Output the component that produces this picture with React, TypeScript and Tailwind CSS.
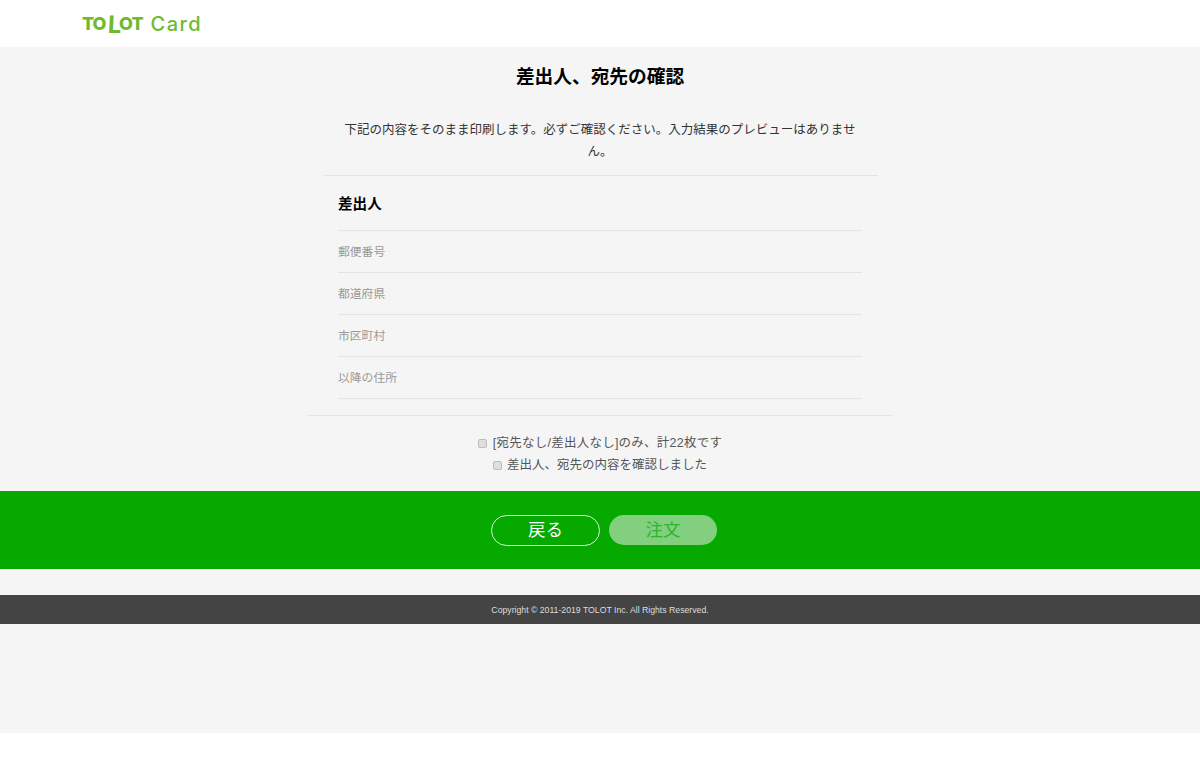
const font = { jp: "font-['Liberation_Sans','Noto_Sans_CJK_JP',sans-serif]" };

const labels = ["郵便番号", "都道府県", "市区町村", "以降の住所"];

const checkbox = "appearance-none w-[9px] h-[9px] rounded-[2px] border border-[#bdbdbd] bg-[#dedede]";

const Logo = () => (
  <div className="flex items-center text-[#6fba2c] font-['Inter',sans-serif] ml-[82px]">
    <span className="flex items-center text-[18px] font-extrabold leading-none tracking-[-1px]">
      TO
      <span className="relative top-[1px] ml-[2px] mr-[-1px] text-[24px] font-bold leading-none -skew-x-3">L</span>
      OT
    </span>
    <span className="ml-[8px] text-[20px] font-medium leading-none tracking-[1.4px]">Card</span>
  </div>
);

export default function App() {
  return (
    <div className={`${font.jp} bg-white min-h-[760px]`}>
      <header className="h-[47px] bg-white flex items-center">
        <Logo />
      </header>

      <div className="bg-[#f5f5f5] h-[686px]">
        <main className="w-[586px] mx-auto">
          <h2 className="pt-[18px] text-center text-[18.7px] font-bold leading-[24px] text-black">差出人、宛先の確認</h2>
          <div className="mx-[15.5px] border-b border-[#e4e4e4]">
            <p className="mt-[30px] px-[22px] pb-[12px] text-center text-[12.5px] leading-[22px] text-[#333]">
              下記の内容をそのまま印刷します。必ずご確認ください。入力結果のプレビューはありません。
            </p>
          </div>
          <section className="border-b border-[#e4e4e4]">
            <div className="mx-[31px] mb-4">
              <h3 className="h-[55px] pt-[3px] flex items-center border-b border-[#e4e4e4] text-[14.6px] font-bold text-black">差出人</h3>
              {labels.map((label) => (
                <div key={label} className="h-[42px] pt-[2px] flex items-center border-b border-[#e4e4e4] text-[11.8px] text-[#999]">
                  {label}
                </div>
              ))}
            </div>
          </section>
          <div className="pt-[16px] flex flex-col items-center text-[12.5px] leading-[22px] text-[#555]">
            <label className="flex items-center gap-[6px] tracking-[0.24px]">
              <input type="checkbox" className={checkbox} />
              [宛先なし/差出人なし]のみ、計22枚です
            </label>
            <label className="flex items-center gap-[5px]">
              <input type="checkbox" className={checkbox} />
              差出人、宛先の内容を確認しました
            </label>
          </div>
        </main>

        <div className="mt-[15px] h-[78px] pl-[8px] bg-[#05a900] flex items-center justify-center gap-[9px]">
          <button className="w-[109px] h-[31px] pt-[1px] rounded-full border border-[#d8f0d8] text-white text-[17.5px] leading-none">戻る</button>
          <button className="w-[108px] h-[30px] pt-[1px] rounded-full bg-[#83cf80] text-[#2fb52c] text-[17.5px] leading-none">注文</button>
        </div>

        <footer className="mt-[26px] h-[29px] pt-[2px] bg-[#444] flex items-center justify-center text-[8.7px] text-[#ddd]">
          Copyright © 2011-2019 TOLOT Inc. All Rights Reserved.
        </footer>
      </div>
    </div>
  );
}
